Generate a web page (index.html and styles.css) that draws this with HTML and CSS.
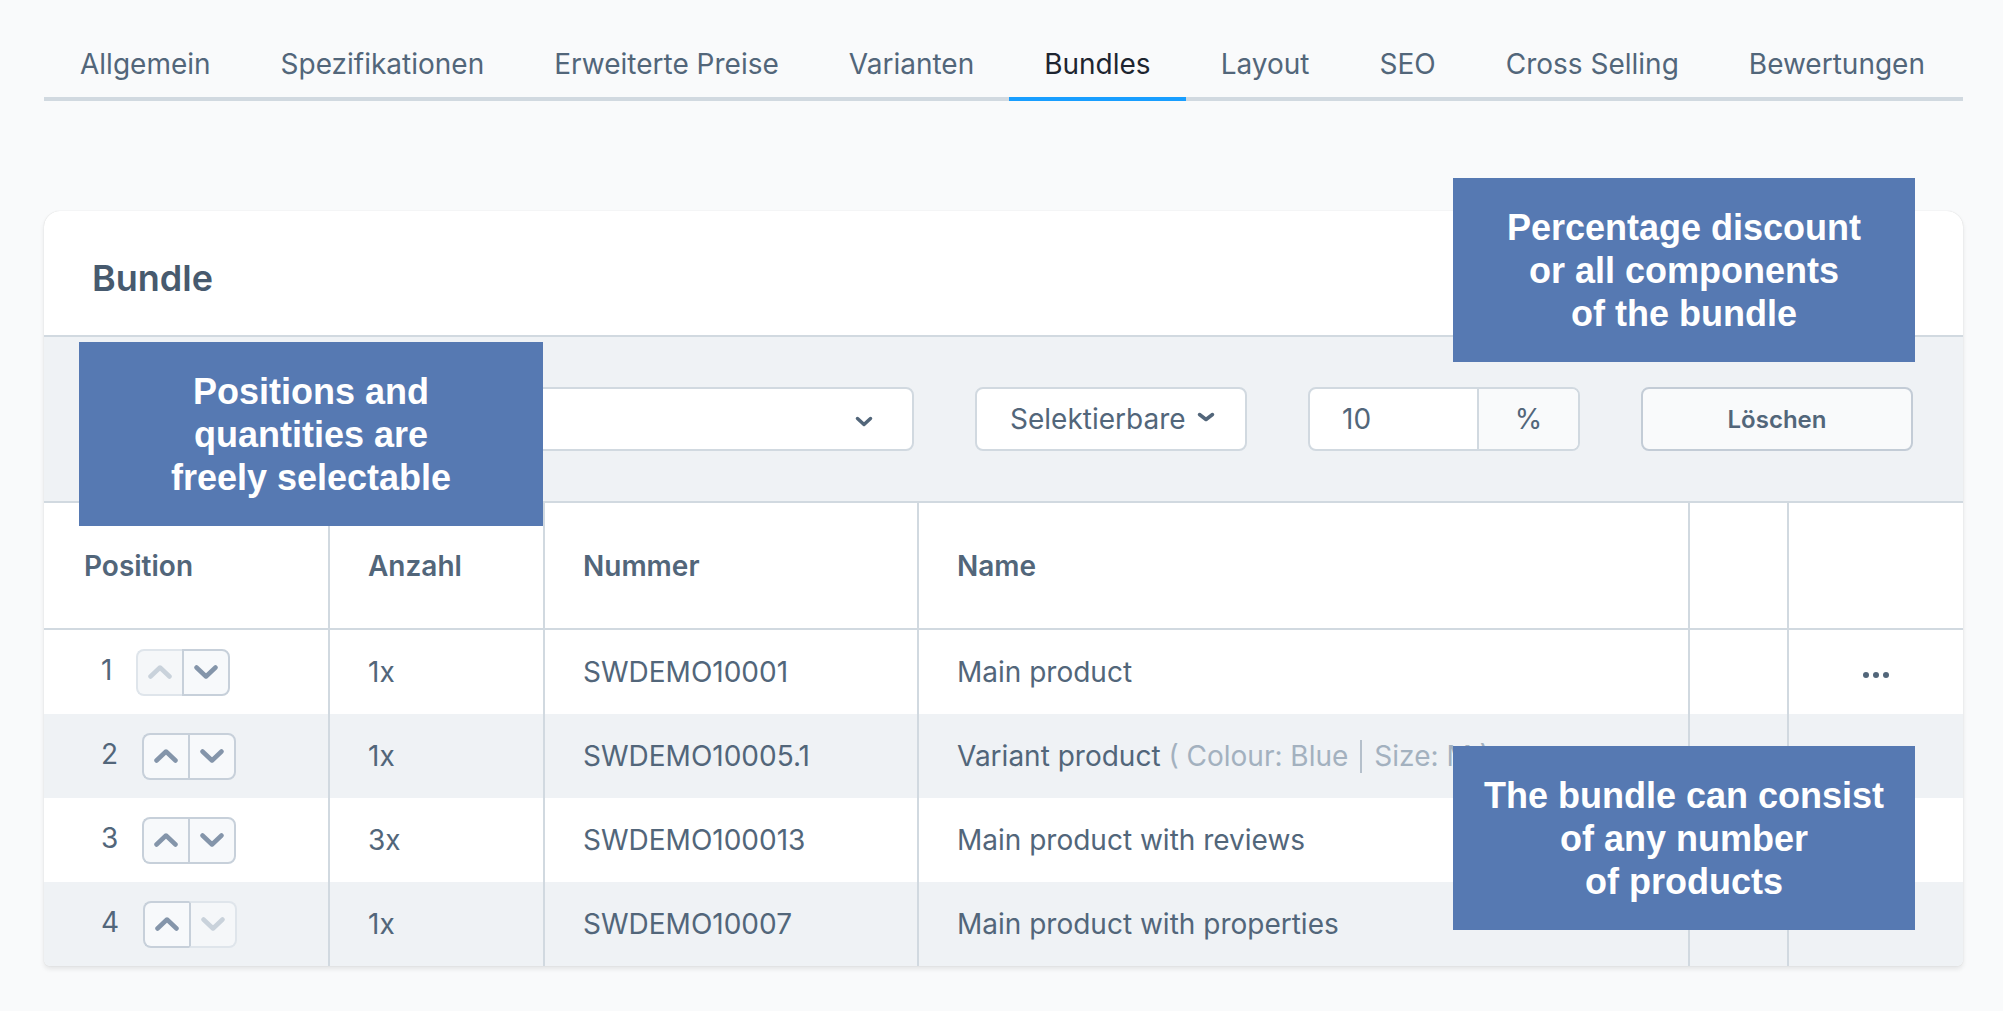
FILE: index.html
```html
<!DOCTYPE html>
<html lang="de">
<head>
<meta charset="utf-8">
<title>Bundles</title>
<link rel="stylesheet" href="styles.css">
</head>
<body>
<div class="page">
  <nav class="tabs">
    <a class="tab">Allgemein</a>
    <a class="tab">Spezifikationen</a>
    <a class="tab">Erweiterte Preise</a>
    <a class="tab">Varianten</a>
    <a class="tab active">Bundles</a>
    <a class="tab">Layout</a>
    <a class="tab">SEO</a>
    <a class="tab">Cross Selling</a>
    <a class="tab">Bewertungen</a>
  </nav>

  <section class="card">
    <header class="card-head"><h2 class="card-title">Bundle</h2></header>

    <div class="toolbar">
      <div class="field select wide">
        <span class="select-value"></span>
        <svg class="chev" width="18" height="11" viewBox="0 0 18 11"><path d="M2.5 2.5 L9 8.5 L15.5 2.5" fill="none" stroke="#52667a" stroke-width="3.5" stroke-linecap="round" stroke-linejoin="round"/></svg>
      </div>
      <div class="field select small">
        <span class="select-value">Selektierbare</span>
        <svg class="chev-sm" width="18" height="10" viewBox="0 0 18 10"><path d="M2.5 2.5 L9 7.5 L15.5 2.5" fill="none" stroke="#52667a" stroke-width="3.5" stroke-linecap="round" stroke-linejoin="round"/></svg>
      </div>
      <div class="field number">
        <span class="num-value">10</span>
        <span class="suffix">%</span>
      </div>
      <button class="btn">Löschen</button>
    </div>

    <div class="grid">
      <div class="row head">
        <div class="cell first">Position</div>
        <div class="cell">Anzahl</div>
        <div class="cell">Nummer</div>
        <div class="cell">Name</div>
        <div class="cell"></div>
        <div class="cell"></div>
      </div>

      <div class="row">
        <div class="cell first pos"><span class="pos-num">1</span>
          <span class="stepper">
            <span class="step up disabled"><svg width="24" height="14" viewBox="0 0 24 14"><path d="M2.5 11.5 L12 2.5 L21.5 11.5" /></svg></span>
            <span class="step down"><svg width="24" height="14" viewBox="0 0 24 14"><path d="M2.5 2.5 L12 11.5 L21.5 2.5" /></svg></span>
          </span>
        </div>
        <div class="cell">1x</div>
        <div class="cell">SWDEMO10001</div>
        <div class="cell">Main product</div>
        <div class="cell"></div>
        <div class="cell center"><svg class="dots" width="26" height="6" viewBox="0 0 26 6"><circle cx="3" cy="3" r="3"/><circle cx="13" cy="3" r="3"/><circle cx="23" cy="3" r="3"/></svg></div>
      </div>

      <div class="row alt">
        <div class="cell first pos"><span class="pos-num">2</span>
          <span class="stepper">
            <span class="step up"><svg width="24" height="14" viewBox="0 0 24 14"><path d="M2.5 11.5 L12 2.5 L21.5 11.5" /></svg></span>
            <span class="step down"><svg width="24" height="14" viewBox="0 0 24 14"><path d="M2.5 2.5 L12 11.5 L21.5 2.5" /></svg></span>
          </span>
        </div>
        <div class="cell">1x</div>
        <div class="cell">SWDEMO10005.1</div>
        <div class="cell nowrap">Variant product&nbsp;<span class="opt">(&nbsp;Colour: Blue<i class="sep"></i>Size: M )</span></div>
        <div class="cell"></div>
        <div class="cell center"><svg class="dots" width="26" height="6" viewBox="0 0 26 6"><circle cx="3" cy="3" r="3"/><circle cx="13" cy="3" r="3"/><circle cx="23" cy="3" r="3"/></svg></div>
      </div>

      <div class="row">
        <div class="cell first pos"><span class="pos-num">3</span>
          <span class="stepper">
            <span class="step up"><svg width="24" height="14" viewBox="0 0 24 14"><path d="M2.5 11.5 L12 2.5 L21.5 11.5" /></svg></span>
            <span class="step down"><svg width="24" height="14" viewBox="0 0 24 14"><path d="M2.5 2.5 L12 11.5 L21.5 2.5" /></svg></span>
          </span>
        </div>
        <div class="cell">3x</div>
        <div class="cell">SWDEMO100013</div>
        <div class="cell">Main product with reviews</div>
        <div class="cell"></div>
        <div class="cell center"><svg class="dots" width="26" height="6" viewBox="0 0 26 6"><circle cx="3" cy="3" r="3"/><circle cx="13" cy="3" r="3"/><circle cx="23" cy="3" r="3"/></svg></div>
      </div>

      <div class="row alt">
        <div class="cell first pos"><span class="pos-num">4</span>
          <span class="stepper">
            <span class="step up"><svg width="24" height="14" viewBox="0 0 24 14"><path d="M2.5 11.5 L12 2.5 L21.5 11.5" /></svg></span>
            <span class="step down disabled"><svg width="24" height="14" viewBox="0 0 24 14"><path d="M2.5 2.5 L12 11.5 L21.5 2.5" /></svg></span>
          </span>
        </div>
        <div class="cell">1x</div>
        <div class="cell">SWDEMO10007</div>
        <div class="cell">Main product with properties</div>
        <div class="cell"></div>
        <div class="cell center"><svg class="dots" width="26" height="6" viewBox="0 0 26 6"><circle cx="3" cy="3" r="3"/><circle cx="13" cy="3" r="3"/><circle cx="23" cy="3" r="3"/></svg></div>
      </div>
    </div>
  </section>

  <div class="note note-positions">Positions and<br>quantities are<br>freely selectable</div>
  <div class="note note-discount">Percentage discount<br>or all components<br>of the bundle</div>
  <div class="note note-products">The bundle can consist<br>of any number<br>of products</div>
</div>
</body>
</html>
```

FILE: styles.css
```css
* { box-sizing: border-box; }

html, body {
  margin: 0;
  background: #f9fafb;
}

body {
  font-family: Inter, "Noto Sans", "Liberation Sans", sans-serif;
  color: #52667a;
}

.page {
  position: relative;
  padding: 44px 40px 44px 44px;
  min-height: 1011px;
}

/* Tabs */
.tabs {
  display: flex;
  border-bottom: 4px solid #d1d9e0;
}

.tab {
  display: block;
  padding: 0 35px 13px;
  font-size: 28px;
  line-height: 40px;
  color: #52667a;
  border-bottom: 4px solid transparent;
  margin-bottom: -4px;
  white-space: nowrap;
}

.tab:first-child {
  padding-left: 36px;
}

.tab.active {
  color: #1d2530;
  border-bottom-color: #189eff;
}

/* Card */
.card {
  margin-top: 110px;
  background: #fff;
  border-radius: 16px 16px 6px 6px;
  box-shadow: 0 0 1px rgba(0, 0, 0, 0.18), 0 3px 5px rgba(0, 0, 0, 0.09);
  overflow: hidden;
}

.card-head {
  padding: 45px 48px 35px;
  border-bottom: 2px solid #d1d9e0;
}

.card-title {
  margin: 0;
  font-size: 36px;
  line-height: 44px;
  font-weight: 600;
  color: #475a6e;
}

/* Toolbar */
.toolbar {
  display: flex;
  gap: 61px;
  padding: 50px 50px;
  background: #eff2f5;
  border-bottom: 2px solid #d1d9e0;
}

.field {
  height: 64px;
  border: 2px solid #d1d9e0;
  border-radius: 8px;
  background: #fff;
  display: flex;
  align-items: center;
  font-size: 28px;
  color: #52667a;
}

.select.wide {
  flex: 1;
  justify-content: flex-end;
  padding-right: 39px;
}

.select.wide .chev {
  margin-top: 4px;
}

.select.small {
  width: 272px;
  padding: 0 20px 0 33px;
  gap: 11px;
}

.chev-sm {
  margin-top: -4px;
}

.number {
  width: 272px;
  overflow: hidden;
}

.num-value {
  flex: 1;
  padding-left: 32px;
}

.suffix {
  width: 101px;
  height: 100%;
  display: flex;
  align-items: center;
  justify-content: center;
  background: #f9fafb;
  border-left: 2px solid #d1d9e0;
}

.btn {
  width: 272px;
  height: 64px;
  border: 2px solid #c3ccd6;
  border-radius: 8px;
  background: #f9fafb;
  font-family: Inter, "Noto Sans", "Liberation Sans", sans-serif;
  font-size: 24px;
  font-weight: 600;
  color: #52667a;
  padding: 0;
}

/* Grid table */
.row {
  display: grid;
  grid-template-columns: 284px 215px 374px 771px 99px 1fr;
  height: 84px;
  font-size: 28px;
  color: #52667a;
}

.row.alt {
  background: #eff2f5;
}

.row.head {
  height: 127px;
  border-bottom: 2px solid #d1d9e0;
  font-weight: 600;
}

.cell {
  display: flex;
  align-items: center;
  padding-left: 38px;
  border-left: 2px solid #d1d9e0;
  white-space: nowrap;
  overflow: hidden;
}

.cell.first {
  border-left: 0;
  padding-left: 40px;
}

.cell.pos {
  padding-left: 57px;
}

.cell.center {
  justify-content: center;
  padding-left: 0;
}

.pos-num {
  margin-top: -4px;
}

.stepper {
  display: flex;
  margin-left: 24px;
  height: 47px;
}

.step {
  width: 46px;
  height: 47px;
  display: flex;
  align-items: center;
  justify-content: center;
  background: #f7f9fb;
  border: 2px solid #c7d0da;
}

.step svg path {
  fill: none;
  stroke: #8495aa;
  stroke-width: 4.5;
  stroke-linecap: round;
  stroke-linejoin: round;
}

.step.up {
  border-right: 0;
  border-radius: 8px 0 0 8px;
}

.step.down {
  width: 48px;
  border-radius: 0 8px 8px 0;
}

.step.disabled {
  border-color: #dfe5eb;
  background: #f5f7f9;
}

.step.down.disabled {
  border-left-color: #c7d0da;
}

.step.disabled svg path {
  stroke: #c9d2db;
}

.dots {
  fill: #52667a;
  margin-top: 6px;
}

.opt {
  color: #a3b1bf;
  display: inline-flex;
  align-items: center;
}

.sep {
  display: inline-block;
  width: 2px;
  height: 33px;
  background: #b5c0cb;
  margin: 0 12px 0 12px;
}

/* Annotation overlays */
.note {
  position: absolute;
  width: 463px;
  height: 184px;
  background: #5679b2;
  color: #fff;
  font-family: "Liberation Sans", Arial, sans-serif;
  font-weight: 700;
  font-size: 36px;
  line-height: 43px;
  text-align: center;
  display: flex;
  align-items: center;
  justify-content: center;
}

.note-positions {
  left: 79px;
  top: 342px;
  width: 464px;
}

.note-discount {
  left: 1453px;
  top: 178px;
  width: 462px;
}

.note-products {
  left: 1453px;
  top: 746px;
  width: 462px;
}
```
